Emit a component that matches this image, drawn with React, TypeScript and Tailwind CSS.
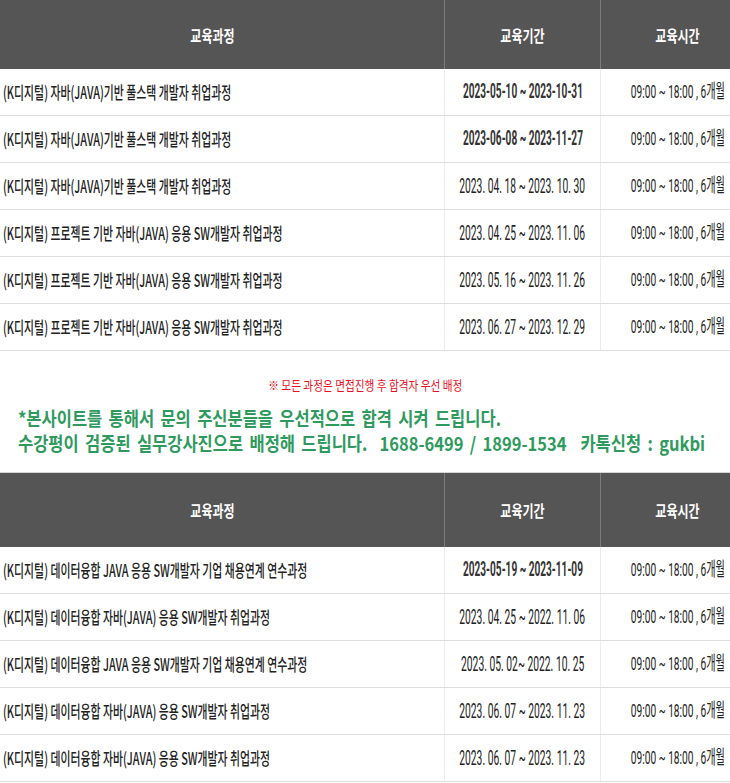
import React from 'react'

type Course = {
  name: string
  period: string
  bold?: boolean
}

const firstCourses: Course[] = [
  { name: '(K디지털) 자바(JAVA)기반 풀스택 개발자 취업과정', period: '2023-05-10 ~ 2023-10-31', bold: true },
  { name: '(K디지털) 자바(JAVA)기반 풀스택 개발자 취업과정', period: '2023-06-08 ~ 2023-11-27', bold: true },
  { name: '(K디지털) 자바(JAVA)기반 풀스택 개발자 취업과정', period: '2023. 04. 18 ~ 2023. 10. 30' },
  { name: '(K디지털) 프로젝트 기반 자바(JAVA) 응용 SW개발자 취업과정', period: '2023. 04. 25 ~ 2023. 11. 06' },
  { name: '(K디지털) 프로젝트 기반 자바(JAVA) 응용 SW개발자 취업과정', period: '2023. 05. 16 ~ 2023. 11. 26' },
  { name: '(K디지털) 프로젝트 기반 자바(JAVA) 응용 SW개발자 취업과정', period: '2023. 06. 27 ~ 2023. 12. 29' },
]

const secondCourses: Course[] = [
  { name: '(K디지털) 데이터융합 JAVA 응용 SW개발자 기업 채용연계 연수과정', period: '2023-05-19 ~ 2023-11-09', bold: true },
  { name: '(K디지털) 데이터융합 자바(JAVA) 응용 SW개발자 취업과정', period: '2023. 04. 25 ~ 2022. 11. 06' },
  { name: '(K디지털) 데이터융합 JAVA 응용 SW개발자 기업 채용연계 연수과정', period: '2023. 05. 02~ 2022. 10. 25' },
  { name: '(K디지털) 데이터융합 자바(JAVA) 응용 SW개발자 취업과정', period: '2023. 06. 07 ~ 2023. 11. 23' },
  { name: '(K디지털) 데이터융합 자바(JAVA) 응용 SW개발자 취업과정', period: '2023. 06. 07 ~ 2023. 11. 23' },
]

const TIME = '09:00 ~ 18:00 , 6개월'

function TableHeader({ height }: { height: string }) {
  return (
    <div className={`grid grid-cols-[444px_156px_130px] bg-[#555555] text-white ${height}`}>
      <div className="flex items-center justify-center pr-[20px]">
        <span className="inline-block whitespace-nowrap text-[16px] font-bold scale-x-[0.75]">교육과정</span>
      </div>
      <div className="flex items-center justify-center border-l border-[#7d7d7d]">
        <span className="inline-block whitespace-nowrap text-[16px] font-bold scale-x-[0.75]">교육기간</span>
      </div>
      <div className="flex items-center justify-center border-l border-[#7d7d7d] pl-[24px]">
        <span className="inline-block whitespace-nowrap text-[16px] font-bold scale-x-[0.75]">교육시간</span>
      </div>
    </div>
  )
}

function CourseRow({ course }: { course: Course }) {
  return (
    <div className="grid h-[47px] grid-cols-[444px_156px_130px] border-b border-[#dddddd] bg-white text-[#222222]">
      <div className="flex items-center pl-[3px]">
        <span className="inline-block origin-left whitespace-nowrap text-[17px] font-medium scale-x-[0.64]">
          {course.name}
        </span>
      </div>
      <div className="flex items-center justify-center border-l border-[#ececec]">
        {course.bold ? (
          <span className="inline-block whitespace-nowrap font-['Roboto',sans-serif] text-[21px] font-bold text-[#333333] scale-x-[0.48]">
            {course.period}
          </span>
        ) : (
          <span className="inline-block whitespace-nowrap font-['Roboto',sans-serif] text-[20px] scale-x-[0.515]">
            {course.period}
          </span>
        )}
      </div>
      <div className="flex items-center justify-center border-l border-[#ececec] pl-[24px]">
        <span className="inline-block whitespace-nowrap font-['Roboto','Noto_Sans_CJK_KR',sans-serif] text-[19px] scale-x-[0.535]">
          {TIME}
        </span>
      </div>
    </div>
  )
}

function CourseTable({ courses, headerHeight }: { courses: Course[]; headerHeight: string }) {
  return (
    <div>
      <TableHeader height={headerHeight} />
      {courses.map((course, i) => (
        <CourseRow key={i} course={course} />
      ))}
    </div>
  )
}

export default function App() {
  return (
    <div className="h-[783px] w-[730px] overflow-hidden bg-white font-['Noto_Sans_CJK_KR',sans-serif]">
      <CourseTable courses={firstCourses} headerHeight="h-[69px]" />

      {/* 안내 문구 */}
      <div className="h-[121px] pt-[24px]">
        <div className="flex h-[20px] items-center justify-center">
          <span className="inline-block whitespace-nowrap text-[13px] text-[#e8101e] scale-x-[0.82]">
            ※ 모든 과정은 면접진행 후 합격자 우선 배정
          </span>
        </div>
        <div className="mt-[10px] pl-[18px] text-[19px] font-bold leading-[25px] text-[#2f9a5e]">
          <div className="origin-left whitespace-nowrap scale-x-[0.868] [word-spacing:3px]">
            *본사이트를 통해서 문의 주신분들을 우선적으로 합격 시켜 드립니다.
          </div>
          <div className="origin-left whitespace-nowrap scale-x-[0.868] [word-spacing:3px]">
            수강평이 검증된 실무강사진으로 배정해 드립니다.
            <span className="ml-[14px]">1688-6499 / 1899-1534</span>
            <span className="ml-[16px]">카톡신청 : gukbi</span>
          </div>
        </div>
      </div>

      <div className="border-t border-[#d6d6d6]">
        <CourseTable courses={secondCourses} headerHeight="h-[74px]" />
      </div>
    </div>
  )
}
